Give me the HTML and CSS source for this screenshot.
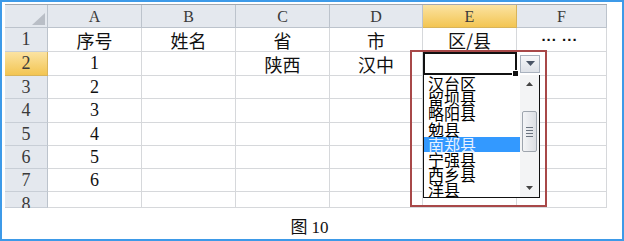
FILE: index.html
```html
<!DOCTYPE html>
<html>
<head>
<meta charset="UTF-8">
<title>图 10</title>
<link rel="stylesheet" href="styles.css">
</head>
<body>
<div class="frame">
  <div class="sheet">
    <div class="grid">
      <div class="hd corner"><span class="tri"></span></div>
      <div class="hd">A</div>
      <div class="hd">B</div>
      <div class="hd">C</div>
      <div class="hd">D</div>
      <div class="hd on">E</div>
      <div class="hd">F</div>

      <div class="rh">1</div>
      <div class="c zh">序号</div>
      <div class="c zh">姓名</div>
      <div class="c zh">省</div>
      <div class="c zh">市</div>
      <div class="c zh">区/县</div>
      <div class="c dots">... ...</div>

      <div class="rh on">2</div>
      <div class="c">1</div>
      <div class="c"></div>
      <div class="c zh">陕西</div>
      <div class="c zh">汉中</div>
      <div class="c"></div>
      <div class="c"></div>

      <div class="rh">3</div>
      <div class="c">2</div>
      <div class="c"></div><div class="c"></div><div class="c"></div><div class="c"></div><div class="c"></div>

      <div class="rh">4</div>
      <div class="c">3</div>
      <div class="c"></div><div class="c"></div><div class="c"></div><div class="c"></div><div class="c"></div>

      <div class="rh">5</div>
      <div class="c">4</div>
      <div class="c"></div><div class="c"></div><div class="c"></div><div class="c"></div><div class="c"></div>

      <div class="rh">6</div>
      <div class="c">5</div>
      <div class="c"></div><div class="c"></div><div class="c"></div><div class="c"></div><div class="c"></div>

      <div class="rh">7</div>
      <div class="c">6</div>
      <div class="c"></div><div class="c"></div><div class="c"></div><div class="c"></div><div class="c"></div>

      <div class="rh cut">8</div>
      <div class="c"></div>
      <div class="c"></div><div class="c"></div><div class="c"></div><div class="c"></div><div class="c"></div>
    </div>

    <!-- data validation dropdown on E2 -->
    <div class="dropdown">
      <div class="pick">
        <div class="cell-input"><span class="handle"></span></div>
        <div class="arrow-btn">
          <svg width="9" height="5" viewBox="0 0 9 5"><path d="M0 0H9L4.5 5Z" fill="#4a5566"/></svg>
        </div>
      </div>
      <div class="list">
        <div class="items">
          <div class="item">汉台区</div>
          <div class="item">留坝县</div>
          <div class="item">略阳县</div>
          <div class="item">勉县</div>
          <div class="item sel">南郑县</div>
          <div class="item">宁强县</div>
          <div class="item">西乡县</div>
          <div class="item">洋县</div>
        </div>
        <div class="scroll">
          <div class="sc-up"><svg width="7" height="4" viewBox="0 0 7 4"><path d="M0 4H7L3.5 0Z" fill="#444"/></svg></div>
          <div class="sc-gap"></div>
          <div class="thumb"><span></span><span></span><span></span><span></span></div>
          <div class="sc-fill"></div>
          <div class="sc-down"><svg width="7" height="4" viewBox="0 0 7 4"><path d="M0 0H7L3.5 4Z" fill="#444"/></svg></div>
        </div>
      </div>
    </div>
  </div>
  <div class="caption">图 10</div>
</div>
</body>
</html>
```

FILE: styles.css
```css
  body {
    margin: 0;
    padding: 0;
    background-color: #fff;
    font-family: "Liberation Serif", "Noto Sans CJK SC", serif;
  }

  .frame {
    width: 624px;
    height: 241px;
    box-sizing: border-box;
    border: 2px solid #3d9ae8;
    padding: 2px 0 0 3px;
  }

  .sheet {
    position: relative;
    width: 602px;
    height: 203px;
    border-top: 1px solid #a2a8b0;
    overflow: hidden;
  }

  .grid {
    display: grid;
    grid-template-columns: 43px 94px 94px 94px 93px 94px 90px;
    grid-template-rows: 23px 24px 24px 23px 24px 23px 23px 23px 16px;
  }

  .hd,
  .rh,
  .c {
    box-sizing: border-box;
    display: flex;
    justify-content: center;
    align-items: center;
    border-right: 1px solid #d6d8db;
    border-bottom: 1px solid #d6d8db;
    font-size: 18px;
    color: #111;
  }

  .hd {
    background-color: #e4e8ee;
    border-right-color: #bcc3cc;
    border-bottom-color: #bcc3cc;
    align-items: flex-end;
    padding-bottom: 1px;
    font-size: 16px;
    color: #3a3a3a;
  }

  .rh {
    background-color: #e4e8ee;
    border-right-color: #bcc3cc;
    border-bottom-color: #c8ced6;
    color: #3a3a3a;
  }

  .rh.cut {
    align-items: flex-start;
    padding-top: 2px;
  }

  .hd.on,
  .rh.on {
    background: linear-gradient(#fbe3a2, #f3c552);
    border-right-color: #d8b45a;
    border-bottom-color: #d8b45a;
  }

  .corner {
    position: relative;
  }

  .tri {
    position: absolute;
    right: 2px;
    bottom: 2px;
    width: 0;
    height: 0;
    border-left: 13px solid transparent;
    border-bottom: 12px solid #b9bec6;
  }

  .zh {
    font-family: "Noto Sans CJK SC", sans-serif;
    font-size: 18px;
    color: #111;
  }

  .dots {
    font-family: "Liberation Sans", sans-serif;
    font-weight: bold;
    font-size: 15px;
    letter-spacing: 1px;
    padding-bottom: 8px;
    padding-right: 4px;
  }

  .dropdown {
    position: absolute;
    left: 405px;
    top: 45px;
    width: 137px;
    height: 157px;
    box-sizing: border-box;
    border: 2px solid #a84848;
    padding-left: 11px;
  }

  .pick {
    display: flex;
    align-items: center;
    gap: 3px;
  }

  .cell-input {
    position: relative;
    width: 94px;
    height: 23px;
    box-sizing: border-box;
    border: 2px solid #111;
    background-color: #fff;
  }

  .handle {
    position: absolute;
    right: -4px;
    bottom: -4px;
    width: 5px;
    height: 5px;
    background-color: #111;
    border: 1px solid #fff;
  }

  .arrow-btn {
    width: 20px;
    height: 18px;
    box-sizing: border-box;
    border: 1px solid #a9b2be;
    background: linear-gradient(#f6f7f9, #dde1e7);
    display: flex;
    justify-content: center;
    align-items: center;
  }

  .list {
    width: 117px;
    height: 123px;
    box-sizing: border-box;
    border: 1px solid #111;
    border-top: none;
    background-color: #fff;
    display: flex;
  }

  .items {
    width: 96px;
    padding-top: 1px;
  }

  .item {
    height: 15.2px;
    line-height: 15.2px;
    padding-left: 4px;
    font-family: "Noto Sans CJK SC", sans-serif;
    font-size: 16px;
    color: #000;
    white-space: nowrap;
  }

  .item.sel {
    background-color: #3399ff;
    color: #e8f2ff;
  }

  .scroll {
    width: 19px;
    display: flex;
    flex-direction: column;
    align-items: center;
    background-color: #f3f4f5;
  }

  .sc-up,
  .sc-down {
    height: 18px;
    display: flex;
    justify-content: center;
    align-items: center;
  }

  .sc-gap {
    height: 18px;
  }

  .thumb {
    width: 15px;
    height: 41px;
    box-sizing: border-box;
    border: 1px solid #9ea5ae;
    border-radius: 2px;
    background: linear-gradient(90deg, #f4f5f7, #dcdfe4);
    display: flex;
    flex-direction: column;
    justify-content: center;
    align-items: center;
    gap: 2px;
  }

  .thumb span {
    width: 7px;
    height: 1px;
    background-color: #6b7480;
  }

  .sc-fill {
    flex: 1;
  }

  .caption {
    margin-top: 9px;
    text-align: center;
    font-family: "Liberation Serif", "Noto Sans CJK SC", serif;
    font-size: 17px;
    line-height: 22px;
    color: #111;
    padding-right: 8px;
  }
```
